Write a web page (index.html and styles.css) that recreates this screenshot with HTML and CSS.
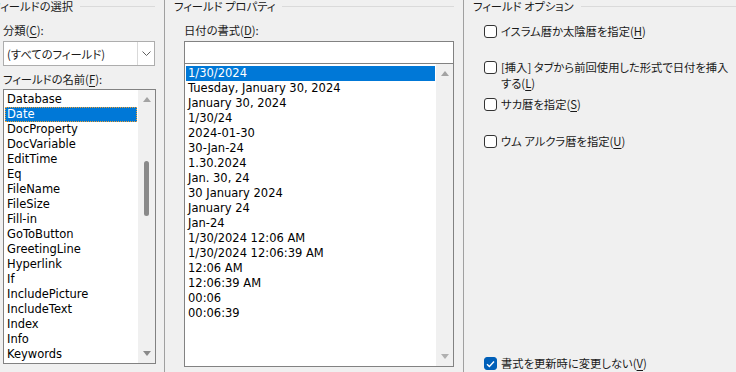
FILE: index.html
```html
<!DOCTYPE html>
<html lang="ja">
<head>
  <meta charset="UTF-8">
  <title>フィールド</title>
  <link rel="stylesheet" href="styles.css">
</head>
<body>
  <div class="dialog">
    <!-- field selection -->
    <section class="col col-select">
      <div class="group-title cut"><span>フィールドの選択</span><i></i></div>
      <div class="label first">分類(<u>C</u>):</div>
      <div class="combo">
        <span class="combo-text">(すべてのフィールド)</span>
        <span class="combo-btn">
          <svg width="9" height="5" viewBox="0 0 9 5"><path d="M0.5 0.5 L4.5 4.5 L8.5 0.5" fill="none" stroke="#606060" stroke-width="1"/></svg>
        </span>
      </div>
      <div class="label second">フィールドの名前(<u>F</u>):</div>
      <div class="listbox names">
        <ul class="items">
          <li>Database</li>
          <li class="sel focus">Date</li>
          <li>DocProperty</li>
          <li>DocVariable</li>
          <li>EditTime</li>
          <li>Eq</li>
          <li>FileName</li>
          <li>FileSize</li>
          <li>Fill-in</li>
          <li>GoToButton</li>
          <li>GreetingLine</li>
          <li>Hyperlink</li>
          <li>If</li>
          <li>IncludePicture</li>
          <li>IncludeText</li>
          <li>Index</li>
          <li>Info</li>
          <li>Keywords</li>
        </ul>
        <div class="vscroll">
          <span class="arrow up"></span>
          <span class="track"><span class="thumb"></span></span>
          <span class="arrow down"></span>
        </div>
      </div>
    </section>

    <!-- field properties -->
    <section class="col col-props">
      <div class="group-title"><span>フィールド プロパティ</span><i></i></div>
      <div class="label first">日付の書式(<u>D</u>):</div>
      <div class="textbox"></div>
      <div class="listbox formats">
        <ul class="items">
          <li class="sel">1/30/2024</li>
          <li>Tuesday, January 30, 2024</li>
          <li>January 30, 2024</li>
          <li>1/30/24</li>
          <li>2024-01-30</li>
          <li>30-Jan-24</li>
          <li>1.30.2024</li>
          <li>Jan. 30, 24</li>
          <li>30 January 2024</li>
          <li>January 24</li>
          <li>Jan-24</li>
          <li>1/30/2024 12:06 AM</li>
          <li>1/30/2024 12:06:39 AM</li>
          <li>12:06 AM</li>
          <li>12:06:39 AM</li>
          <li>00:06</li>
          <li>00:06:39</li>
        </ul>
        <div class="vscroll">
          <span class="arrow up"></span>
          <span class="track"></span>
          <span class="arrow down"></span>
        </div>
      </div>
    </section>

    <!-- field options -->
    <section class="col col-options">
      <div class="group-title"><span>フィールド オプション</span><i></i></div>
      <div class="options">
        <label class="check opt-1"><span class="box"></span><span class="text">イスラム暦か太陰暦を指定(<u>H</u>)</span></label>
        <label class="check opt-2"><span class="box"></span><span class="text">[挿入] タブから前回使用した形式で日付を挿入<br>する(<u>L</u>)</span></label>
        <label class="check opt-3"><span class="box"></span><span class="text">サカ暦を指定(<u>S</u>)</span></label>
        <label class="check opt-4"><span class="box"></span><span class="text">ウム アルクラ暦を指定(<u>U</u>)</span></label>
      </div>
      <label class="check checked"><span class="box">
        <svg width="9" height="8" viewBox="0 0 9 8"><path d="M1 4.2 L3.4 6.5 L8 1.5" fill="none" stroke="#fff" stroke-width="1.4"/></svg>
      </span><span class="text">書式を更新時に変更しない(<u>V</u>)</span></label>
    </section>
  </div>
</body>
</html>
```

FILE: styles.css
```css
/* Word field dialog, date properties */
body { margin: 0; background: #f0f0f0; font-family: "Noto Sans CJK JP", sans-serif; font-size: 11.3px; color: #1a1a1a; font-feature-settings: "palt"; }
.dialog { display: flex; width: 736px; height: 372px; overflow: hidden; }
.col { box-sizing: border-box; height: 372px; display: flex; flex-direction: column; }
.col-select { width: 165px; padding: 0 9px 0 3px; border-right: 1px solid #a0a0a0; }
.col-props { width: 299px; padding: 0 9px 0 19px; border-right: 1px solid #a0a0a0; }
.col-options { flex: 1; padding: 0 0 0 20px; }

.group-title { display: flex; align-items: center; height: 13px; line-height: 13px; margin-left: -10px; white-space: nowrap; }
.group-title.cut { margin-left: -12px; }
.group-title i { flex: 1; height: 1px; background: #dadada; margin-left: 7px; }
.col-options .group-title { margin-left: -11px; }

.label { height: 16px; line-height: 16px; white-space: nowrap; }
.label.first { margin-top: 9px; }
.label.second { margin-top: 5px; }
u { text-decoration-thickness: 1px; text-underline-offset: 2px; }

.combo { box-sizing: border-box; margin-top: 3px; height: 25px; width: 152px; background: #fff; border: 1px solid #adadad; display: flex; align-items: center; }
.combo-text { flex: 1; padding-left: 3px; }
.combo-btn { width: 16px; height: 23px; border-left: 1px solid #d9d9d9; display: flex; align-items: center; justify-content: center; }

.listbox { box-sizing: border-box; background: #fff; border: 1px solid #828282; display: flex; }
.names { margin-top: 2px; height: 275px; width: 153px; }
.textbox { box-sizing: border-box; margin-top: 3px; height: 23px; background: #fff; border: 1px solid #828282; }
.formats { margin-top: -1px; height: 304px; }
.items { list-style: none; margin: 0; padding: 2px 1px 0 1px; flex: 1; font-family: "DejaVu Sans", sans-serif; font-size: 11.5px; color: #000; font-feature-settings: normal; }
.items li { box-sizing: border-box; height: 15px; line-height: 15px; padding-left: 2px; white-space: nowrap; }
.items li.sel { background: #0078d7; color: #fff; }
.items li.focus { outline: 1px dotted #f0a030; outline-offset: -1px; }

.vscroll { width: 17px; background: #f0f0f0; display: flex; flex-direction: column; align-items: center; }
.vscroll .track { flex: 1; display: flex; justify-content: center; }
.arrow { width: 0; height: 0; border-left: 4px solid transparent; border-right: 4px solid transparent; margin: 7px 0; }
.arrow.up { border-bottom: 5px solid #a3a3a3; }
.arrow.down { border-top: 5px solid #8a8a8a; }
.formats .arrow.down { border-top-color: #b0b0b0; }
.names .thumb { width: 5px; height: 55px; margin-top: 52px; border-radius: 3px; background: #8a8a8a; }

.options { flex: 1; padding-top: 10px; }
.check { display: flex; align-items: flex-start; line-height: 16px; color: #1a1a1a; white-space: nowrap; }
.check .box { box-sizing: border-box; flex: none; width: 13px; height: 13px; margin: 2px 4px 0 0; border: 1px solid #333; border-radius: 3px; background: #fff; display: flex; align-items: center; justify-content: center; }
.opt-2 { margin-top: 20px; }
.opt-3 { margin-top: 5px; }
.opt-4 { margin-top: 21px; }
.check.checked { height: 15px; position: relative; top: -2px; }
.check.checked .box { background: #005fb8; border-color: #005fb8; }
```
